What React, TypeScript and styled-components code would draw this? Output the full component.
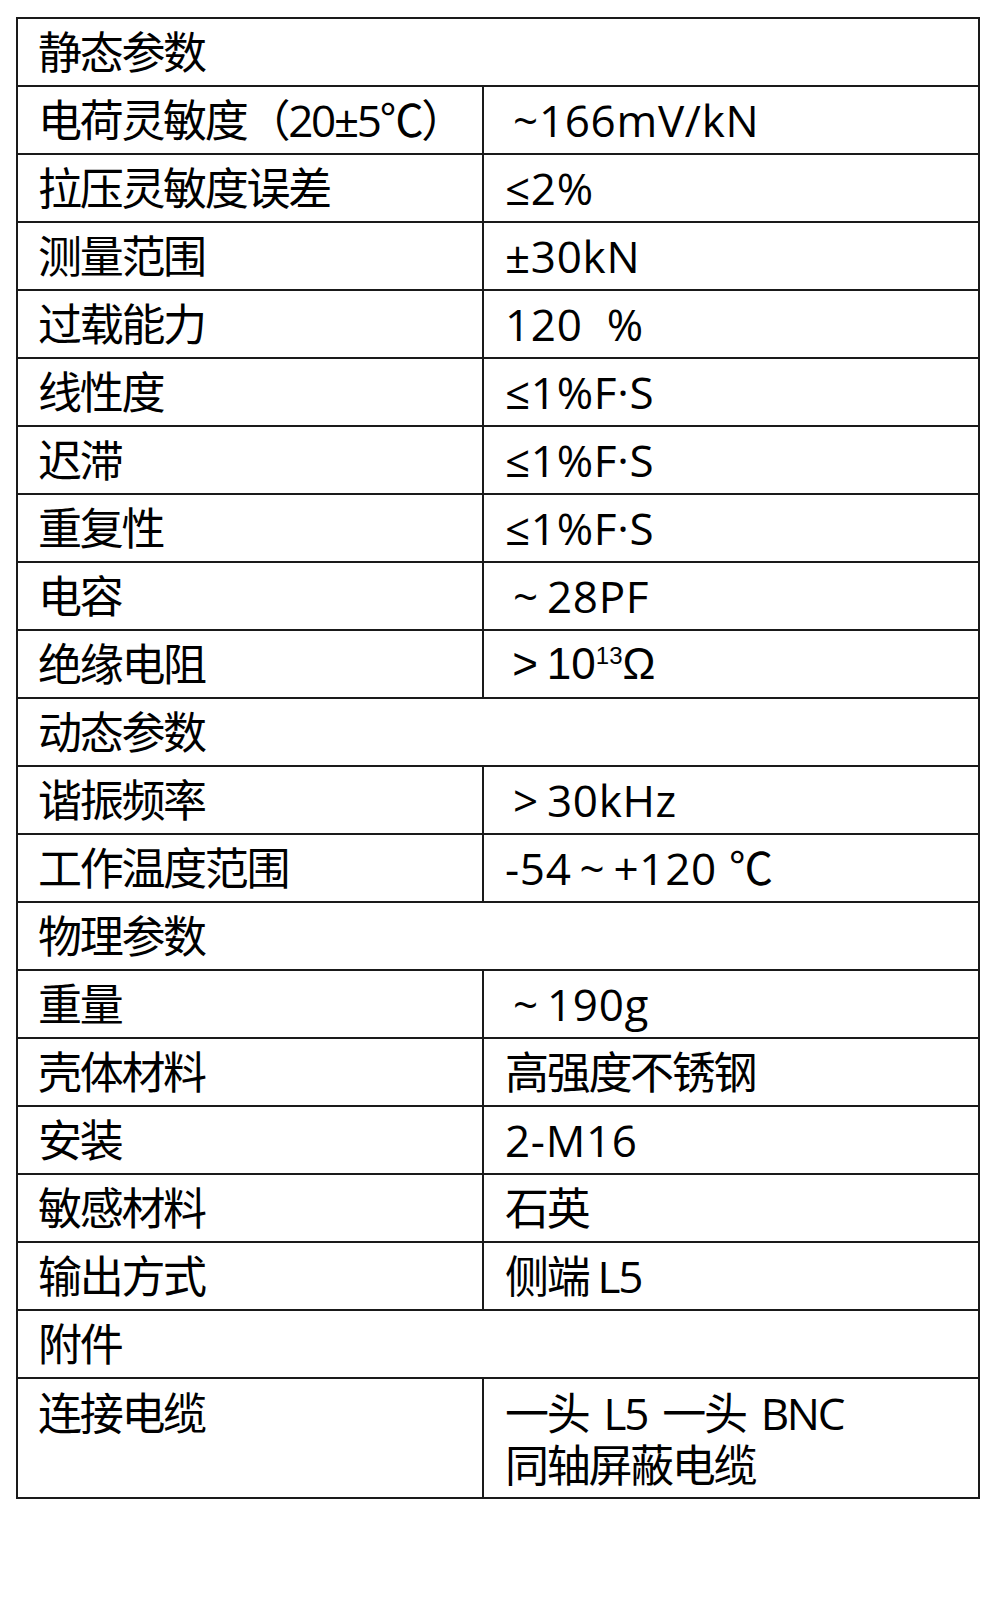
import React from "react";
import styled, { createGlobalStyle } from "styled-components";

const GlobalStyle = createGlobalStyle`
  html, body {
    margin: 0;
    padding: 0;
    background: #ffffff;
  }
  body {
    font-family: "Open Sans", "Noto Sans CJK SC", sans-serif;
    color: #000;
  }
`;

const Page = styled.div`
  width: 997px;
  min-height: 1613px;
  padding-top: 17px;
  padding-left: 16px;
  box-sizing: border-box;
`;

const SpecTable = styled.div`
  display: grid;
  grid-template-columns: 466px 496px;
  width: 964px;
  border-left: 2px solid #1a1a1a;
  border-top: 2px solid #1a1a1a;
  box-sizing: border-box;
`;

const Cell = styled.div<{
  $span?: boolean;
  $tall?: boolean;
  $value?: boolean;
  $arial?: boolean;
  $cjk?: boolean;
}>`
  grid-column: ${(p) => (p.$span ? "1 / -1" : "auto")};
  height: ${(p) => (p.$tall ? 120 : 68)}px;
  box-sizing: border-box;
  border-right: 2px solid #1a1a1a;
  border-bottom: 2px solid #1a1a1a;
  display: flex;
  flex-direction: column;
  justify-content: ${(p) => (p.$tall ? "flex-start" : "center")};
  padding-left: ${(p) => (p.$value ? 21 : 20)}px;
  padding-top: ${(p) => (p.$tall ? 8 : 0)}px;
  font-family: ${(p) =>
    p.$arial
      ? '"Liberation Sans", "Noto Sans CJK SC", sans-serif'
      : '"Open Sans", "Noto Sans CJK SC", sans-serif'};
  font-size: 44px;
  line-height: 52px;
  letter-spacing: ${(p) => (p.$cjk ? "-2.3px" : p.$arial ? "0" : "0.7px")};
  white-space: pre;
  overflow: visible;
`;

const Line = styled.span<{ $wide?: boolean }>`
  display: block;
  word-spacing: ${(p) => (p.$wide ? "6px" : "0")};
`;

const Sup = styled.sup`
  font-size: 24px;
  line-height: 0;
  vertical-align: 15px;
`;

type Row =
  | { kind: "section"; label: string }
  | {
      kind: "pair";
      label: string;
      value: React.ReactNode;
      arial?: boolean;
      tall?: boolean;
      cjk?: boolean;
    };

const rows: Row[] = [
  { kind: "section", label: "静态参数" },
  { kind: "pair", label: "电荷灵敏度（20±5℃）", value: "\u2006~166mV/kN" },
  { kind: "pair", label: "拉压灵敏度误差", value: "≤2%" },
  { kind: "pair", label: "测量范围", value: "±30kN" },
  { kind: "pair", label: "过载能力", value: "120  %" },
  { kind: "pair", label: "线性度", value: "≤1%F·S" },
  { kind: "pair", label: "迟滞", value: "≤1%F·S" },
  { kind: "pair", label: "重复性", value: "≤1%F·S" },
  { kind: "pair", label: "电容", value: "\u2006~\u200928PF" },
  {
    kind: "pair",
    label: "绝缘电阻",
    arial: true,
    value: (
      <span>
        {"\u2006>\u200910"}
        <Sup>13</Sup>Ω
      </span>
    ),
  },
  { kind: "section", label: "动态参数" },
  { kind: "pair", label: "谐振频率", value: "\u2006>\u200930kHz" },
  { kind: "pair", label: "工作温度范围", value: "-54\u2009~\u2009+120 ℃" },
  { kind: "section", label: "物理参数" },
  { kind: "pair", label: "重量", value: "\u2006~\u2009190g" },
  { kind: "pair", label: "壳体材料", value: "高强度不锈钢", cjk: true },
  { kind: "pair", label: "安装", value: "2-M16" },
  { kind: "pair", label: "敏感材料", value: "石英", cjk: true },
  { kind: "pair", label: "输出方式", value: "侧端 L5", cjk: true },
  { kind: "section", label: "附件" },
  {
    kind: "pair",
    label: "连接电缆",
    tall: true,
    cjk: true,
    value: (
      <>
        <Line $wide>一头 L5 一头 BNC</Line>
        <Line>同轴屏蔽电缆</Line>
      </>
    ),
  },
];

export default function App() {
  return (
    <>
      <GlobalStyle />
      <Page>
        <SpecTable>
          {rows.map((r, i) =>
            r.kind === "section" ? (
              <Cell key={i} $span $cjk>
                {r.label}
              </Cell>
            ) : (
              <React.Fragment key={i}>
                <Cell $tall={r.tall} $cjk>
                  {r.label}
                </Cell>
                <Cell $value $tall={r.tall} $arial={r.arial} $cjk={r.cjk}>
                  {r.value}
                </Cell>
              </React.Fragment>
            )
          )}
        </SpecTable>
      </Page>
    </>
  );
}
